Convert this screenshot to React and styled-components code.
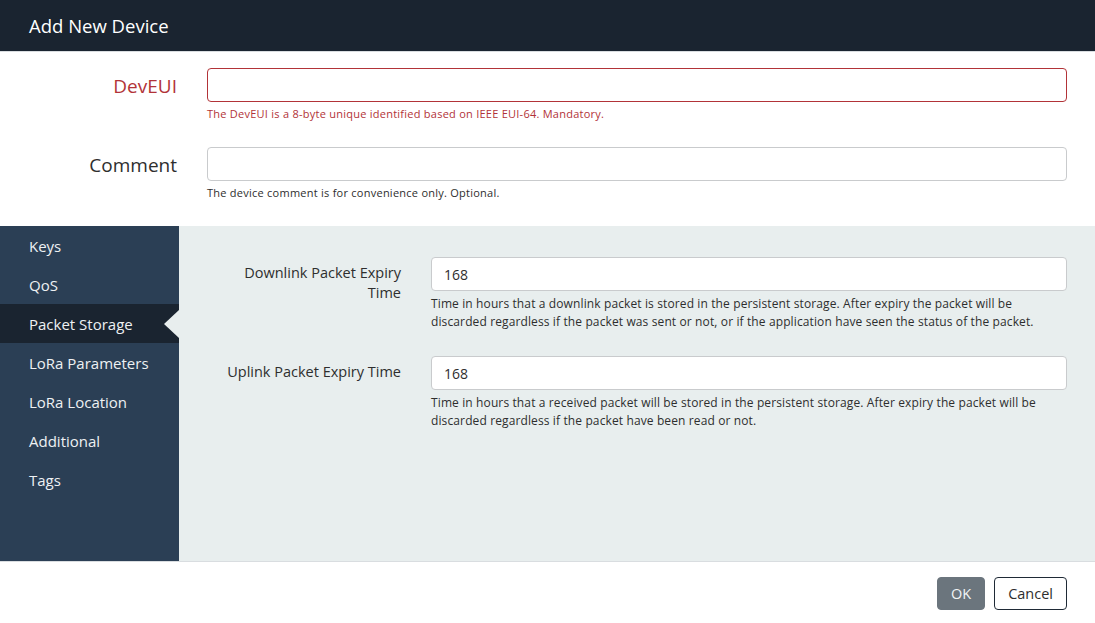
import React from "react";
import styled, { createGlobalStyle } from "styled-components";

const GlobalStyle = createGlobalStyle`
  html, body {
    margin: 0;
    padding: 0;
    background: #ffffff;
  }
  * {
    box-sizing: border-box;
  }
  body {
    font-family: "Open Sans", Lato, sans-serif;
  }
`;

export const Dialog = styled.div`
  width: 1095px;
  height: 623px;
  display: flex;
  flex-flow: column;
  background: #ffffff;
  overflow: hidden;
`;

export const Header = styled.div`
  height: 52px;
  flex-shrink: 0;
  display: flex;
  align-items: center;
  padding-left: 29px;
  background: #1a2430;
  border-bottom: 1px solid #d9dde0;
  color: #ffffff;
  font-size: 18.5px;
`;

export const TopForm = styled.div`
  padding: 16px 28px 26px 0;
  display: flex;
  flex-flow: column;
  gap: 26px;
`;

export const TopRow = styled.div`
  display: grid;
  grid-template-columns: 177px 1fr;
  column-gap: 30px;
`;

export const TopLabel = styled.label`
  text-align: right;
  font-size: 19px;
  line-height: 37px;
  color: ${(p) => (p.error ? "#b23338" : "#2e2e2e")};
`;

export const TextInput = styled.input`
  width: 100%;
  height: 34px;
  border: 1px solid ${(p) => (p.error ? "#b23338" : "#c9cbcd")};
  border-radius: 4px;
  background: #ffffff;
  padding: 0 12px;
  font-family: "Open Sans", sans-serif;
  font-size: 14px;
  color: #2e2e2e;
  outline: none;
`;

export const Help = styled.div`
  margin-top: 5px;
  font-size: 11px;
  line-height: 14px;
  letter-spacing: 0.25px;
  color: ${(p) => (p.error ? "#b23338" : "#2e2e2e")};
`;

export const Body = styled.div`
  flex: 1;
  display: flex;
  border-bottom: 1px solid #d9dde0;
`;

export const Sidebar = styled.nav`
  width: 179px;
  flex-shrink: 0;
  background: #2b3f55;
`;

export const NavItem = styled.div`
  position: relative;
  height: 39px;
  display: flex;
  align-items: center;
  padding-left: 29px;
  font-size: 15px;
  color: #eef1f3;
  background: ${(p) => (p.active ? "#1a2430" : "transparent")};

  &::after {
    content: "";
    display: ${(p) => (p.active ? "block" : "none")};
    position: absolute;
    right: 0;
    top: 50%;
    transform: translateY(-50%);
    border-top: 14px solid transparent;
    border-bottom: 14px solid transparent;
    border-right: 15px solid #e8eeee;
  }
`;

export const Content = styled.div`
  flex: 1;
  background: #e8eeee;
  padding: 31px 28px 0 42px;
  display: flex;
  flex-flow: column;
  gap: 25px;
`;

export const FieldRow = styled.div`
  display: grid;
  grid-template-columns: 180px 1fr;
  column-gap: 30px;
`;

export const FieldLabel = styled.label`
  text-align: right;
  padding-top: 6px;
  font-size: 14.5px;
  line-height: 20px;
  color: #2e2e2e;
`;

export const FieldHelp = styled.div`
  margin-top: 4px;
  font-size: 12px;
  line-height: 18px;
  letter-spacing: 0.12px;
  color: #2e2e2e;
`;

export const Footer = styled.div`
  height: 61px;
  flex-shrink: 0;
  display: flex;
  justify-content: flex-end;
  align-items: flex-start;
  gap: 9px;
  padding: 15px 28px 0 0;
`;

export const Button = styled.button`
  height: 33px;
  padding: 0 13px;
  border-radius: 4px;
  font-family: "Open Sans", sans-serif;
  font-size: 14.5px;
  cursor: pointer;
  background: ${(p) => (p.primary ? "#6b757d" : "#ffffff")};
  color: ${(p) => (p.primary ? "#f2f4f5" : "#2e2e2e")};
  border: 1px solid ${(p) => (p.primary ? "#6b757d" : "#1f2a36")};
`;

const navItems = [
  "Keys",
  "QoS",
  "Packet Storage",
  "LoRa Parameters",
  "LoRa Location",
  "Additional",
  "Tags",
];

const App = () => {
  return (
    <Dialog>
      <GlobalStyle />
      <Header>Add New Device</Header>

      <TopForm>
        <TopRow>
          <TopLabel error>DevEUI</TopLabel>
          <div>
            <TextInput error />
            <Help error>
              The DevEUI is a 8-byte unique identified based on IEEE EUI-64. Mandatory.
            </Help>
          </div>
        </TopRow>
        <TopRow>
          <TopLabel>Comment</TopLabel>
          <div>
            <TextInput />
            <Help>The device comment is for convenience only. Optional.</Help>
          </div>
        </TopRow>
      </TopForm>

      <Body>
        <Sidebar>
          {navItems.map((item) => (
            <NavItem key={item} active={item === "Packet Storage"}>
              {item}
            </NavItem>
          ))}
        </Sidebar>
        <Content>
          <FieldRow>
            <FieldLabel>Downlink Packet Expiry Time</FieldLabel>
            <div>
              <TextInput defaultValue="168" />
              <FieldHelp>
                Time in hours that a downlink packet is stored in the persistent storage. After expiry the packet will be
                discarded regardless if the packet was sent or not, or if the application have seen the status of the packet.
              </FieldHelp>
            </div>
          </FieldRow>
          <FieldRow>
            <FieldLabel>Uplink Packet Expiry Time</FieldLabel>
            <div>
              <TextInput defaultValue="168" />
              <FieldHelp>
                Time in hours that a received packet will be stored in the persistent storage. After expiry the packet will be
                discarded regardless if the packet have been read or not.
              </FieldHelp>
            </div>
          </FieldRow>
        </Content>
      </Body>

      <Footer>
        <Button primary>OK</Button>
        <Button>Cancel</Button>
      </Footer>
    </Dialog>
  );
};

export default App;
